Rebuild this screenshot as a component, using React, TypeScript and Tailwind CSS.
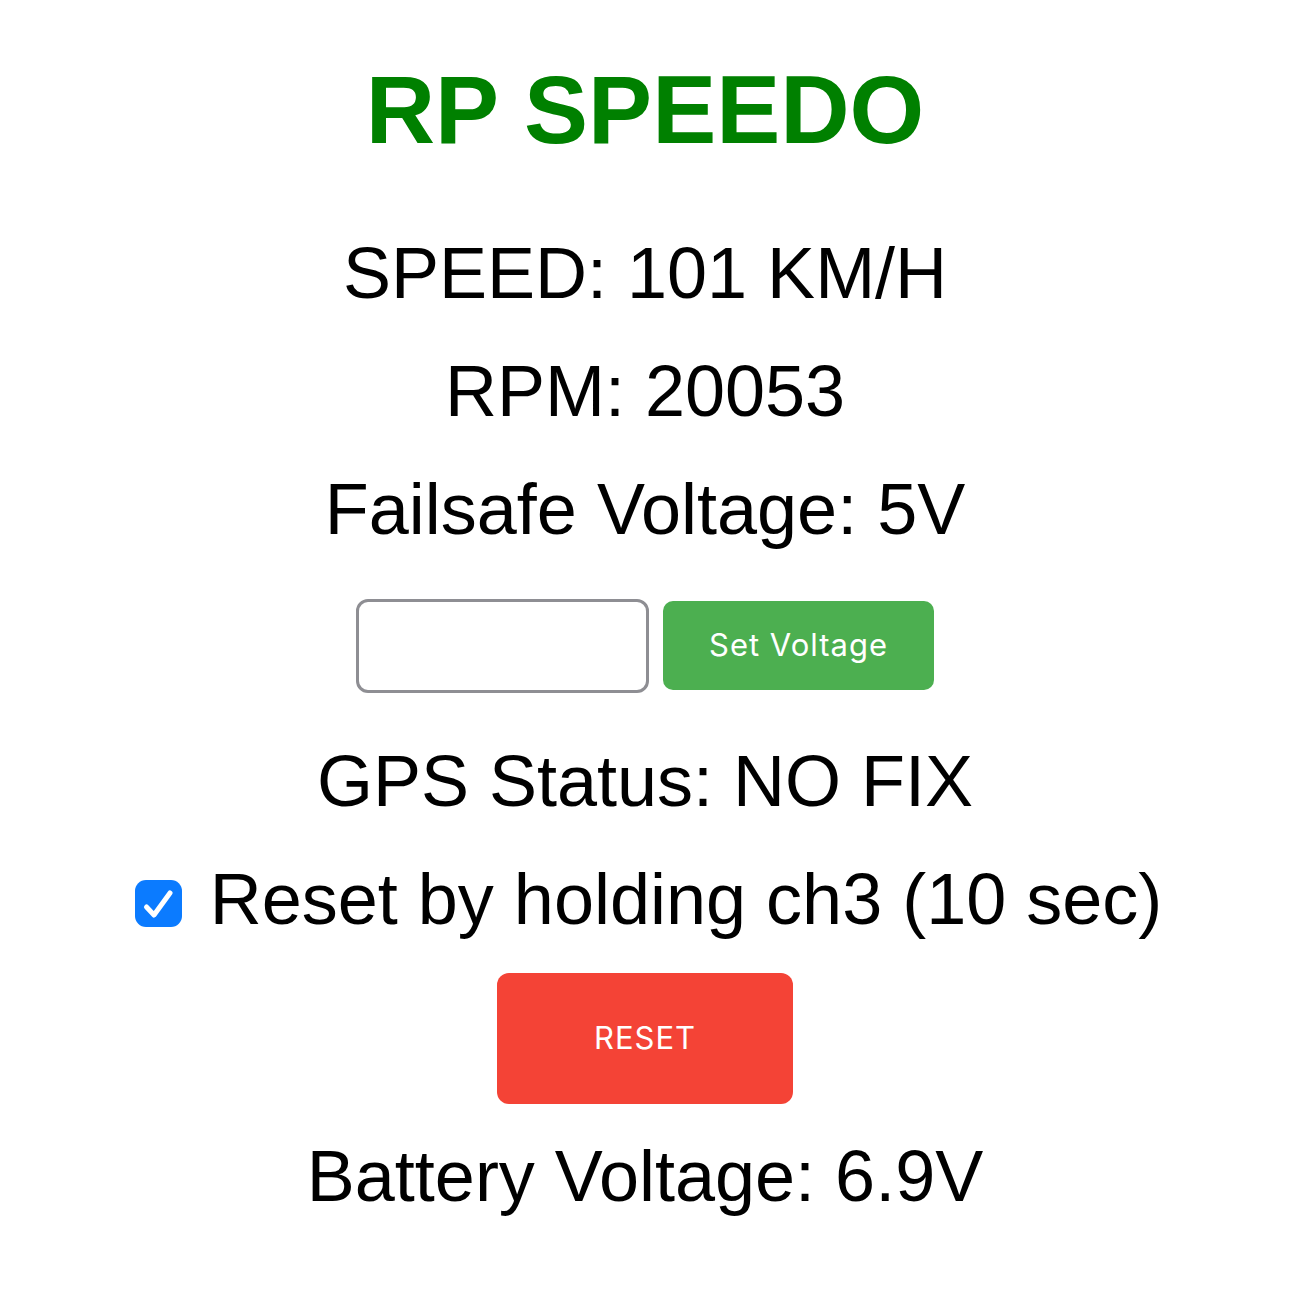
import React, { useState } from 'react';

const App: React.FC = () => {
  const [resetOnHold, setResetOnHold] = useState(true);
  const [voltage, setVoltage] = useState('');

  return (
    <div className="min-h-screen bg-white text-black font-['Liberation_Sans',Arial,sans-serif] flex flex-col items-center pt-[55px]">
      {/* title */}
      <h1 className="text-[96px] leading-[110px] font-bold text-[#008000]">RP SPEEDO</h1>

      <p className="mt-[49px] text-[72px] leading-[118px]">SPEED: 101 KM/H</p>
      <p className="text-[72px] leading-[118px]">RPM: 20053</p>
      <p className="text-[72px] leading-[118px]">Failsafe Voltage: 5V</p>

      {/* failsafe input */}
      <div className="mt-[30px] h-[95px] flex items-center gap-[14px]">
        <input
          type="text"
          value={voltage}
          onChange={(e) => setVoltage(e.target.value)}
          className="w-[293px] h-[94px] rounded-[12px] border-[3px] border-[#8e8e93] bg-white outline-none"
        />
        <button className="w-[271px] h-[89px] rounded-[10px] bg-[#4caf50] text-white text-[31px] tracking-[1px] font-['Inter',sans-serif]">
          Set Voltage
        </button>
      </div>

      <p className="mt-[29px] text-[72px] leading-[118px]">GPS Status: NO FIX</p>

      {/* reset checkbox */}
      <label className="pl-[7px] flex items-center gap-[28px] text-[72px] leading-[118px]">
        <span
          onClick={() => setResetOnHold(!resetOnHold)}
          className={`mt-[8px] w-[47px] h-[47px] rounded-[11px] flex items-center justify-center ${resetOnHold ? 'bg-[#0b7bff]' : 'bg-white border-2 border-gray-400'}`}
        >
          {resetOnHold && (
            <svg viewBox="0 0 47 47" className="w-[47px] h-[47px]" fill="none" stroke="white" strokeWidth="5" strokeLinecap="round" strokeLinejoin="round">
              <path d="M11.5 27l7.5 8L35 13" />
            </svg>
          )}
        </span>
        <span>Reset by holding ch3 (10 sec)</span>
      </label>

      <button className="mt-[15px] w-[296px] h-[131px] rounded-[12px] bg-[#f44336] text-white text-[31px] tracking-[1px] font-['Inter',sans-serif]">
        RESET
      </button>

      <p className="mt-[13px] text-[72px] leading-[118px]">Battery Voltage: 6.9V</p>
    </div>
  );
};

export default App;
